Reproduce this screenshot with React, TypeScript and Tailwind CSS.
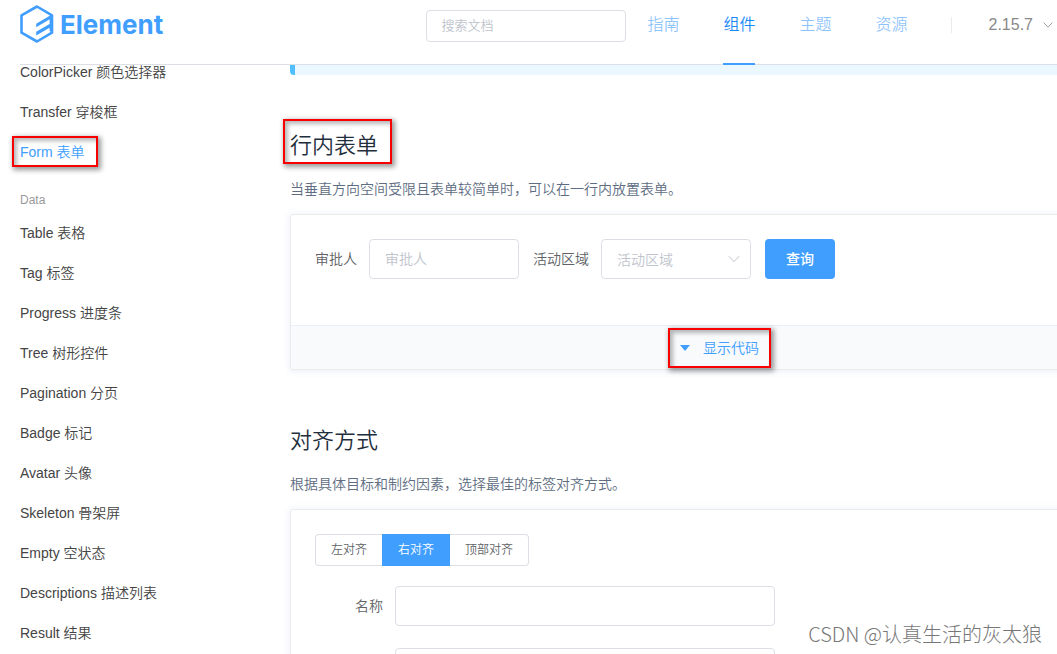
import type { ReactNode } from "react";

const sidebarTop = ["ColorPicker 颜色选择器", "Transfer 穿梭框", "Form 表单"];
const sidebarData = [
  "Table 表格",
  "Tag 标签",
  "Progress 进度条",
  "Tree 树形控件",
  "Pagination 分页",
  "Badge 标记",
  "Avatar 头像",
  "Skeleton 骨架屏",
  "Empty 空状态",
  "Descriptions 描述列表",
  "Result 结果",
];
const navItems = ["指南", "组件", "主题", "资源"];
const alignments = ["左对齐", "右对齐", "顶部对齐"];

function Marked({ children, className, frame }: { children: ReactNode; className?: string; frame: string }) {
  return (
    <span className={`relative inline-block ${className ?? ""}`}>
      {children}
      <span
        aria-hidden="true"
        className={`pointer-events-none absolute border-2 border-[#f80000] shadow-[2px_2px_5px_1px_rgba(0,0,0,0.4),inset_3px_3px_4px_rgba(0,0,0,0.28)] ${frame}`}
      />
    </span>
  );
}

function Arrow({ className }: { className: string }) {
  return (
    <svg viewBox="0 0 12 12" fill="none" stroke="currentColor" className={className} aria-hidden="true">
      <path d="M0.8 3.2 L6 8.6 L11.2 3.2" />
    </svg>
  );
}

function Logo() {
  return (
    <a href="#home" className="flex items-center gap-[6px] text-[#409eff]">
      <svg width="34" height="38" viewBox="0 0 34 38" aria-hidden="true">
        <path
          d="M17 1.5 L32 10.3 V27.7 L17 36.5 L1.5 27.7 V10.3 Z"
          fill="none"
          stroke="currentColor"
          strokeWidth="2.6"
          strokeLinejoin="round"
        />
        <path
          d="M16.2 18.8 L31 10 V13.6 L16.2 22.2 Z M16.2 26.8 L30 18.8 V22.4 L16.2 30.4 Z M29.6 11 H33 V28 L29.6 26 Z"
          fill="currentColor"
        />
      </svg>
      <span className="pt-[2px] font-['Inter',sans-serif] text-[26px] leading-8 font-bold">Element</span>
    </a>
  );
}

function Header() {
  return (
    <header className="ml-5 flex h-[65px] shrink-0 items-start border-b border-[#dcdfe6] pr-1">
      <div className="pt-[5px]">
        <Logo />
      </div>
      <input
        type="search"
        aria-label="搜索文档"
        placeholder="搜索文档"
        className="mt-[10px] ml-auto h-8 w-[200px] rounded border border-[#dcdfe6] px-[14px] pb-[2px] text-[13px] outline-none placeholder:text-[#c0c4cc]"
      />
      <nav className="ml-[21px] flex h-[65px] gap-[44px] text-base">
        {navItems.map((item) => (
          <a
            key={item}
            href="#nav"
            className={
              item === "组件"
                ? "border-b-2 border-[#409eff] pt-[13px] leading-6 text-[#1989fa]"
                : "pt-[13px] leading-6 text-[#1989fa]/50"
            }
          >
            {item}
          </a>
        ))}
      </nav>
      <button
        type="button"
        className="mt-[17px] ml-[43px] flex h-4 items-center border-l border-[#ebebeb] pl-[37px] text-base text-[#888888]"
      >
        2.15.7
        <Arrow className="ml-[10px] size-[10px] text-[#888888]" />
      </button>
    </header>
  );
}

function SidebarLink({ label }: { label: string }) {
  if (label === "Form 表单") {
    return (
      <a href="#form" className="block h-10 leading-10 text-[#409eff]">
        <Marked frame="top-1 -left-2 h-[31px] w-[86px]">{label}</Marked>
      </a>
    );
  }
  return (
    <a href="#component" className="block h-10 leading-10 text-[#444444]">
      {label}
    </a>
  );
}

function Sidebar() {
  return (
    <aside className="-mt-[13px] w-[270px] shrink-0 text-sm">
      {sidebarTop.map((label) => (
        <SidebarLink key={label} label={label} />
      ))}
      <h2 className="mt-[15px] h-[26px] text-xs leading-[26px] text-[#999999]">Data</h2>
      {sidebarData.map((label) => (
        <SidebarLink key={label} label={label} />
      ))}
    </aside>
  );
}

function DemoBlock({ title, text, children }: { title: ReactNode; text: string; children: ReactNode }) {
  return (
    <section className="mt-[55px]">
      <h3 className="text-[22px] leading-8 text-[#1f2f3d]">{title}</h3>
      <p className="mt-[15px] text-sm leading-6 text-[#5e6d82]">{text}</p>
      <div className="mt-[13px] rounded-[3px] border border-[#ebebeb] shadow-[0_0_8px_0_rgba(232,237,250,0.6),0_2px_4px_0_rgba(232,237,250,0.5)]">
        {children}
      </div>
    </section>
  );
}

function InlineForm() {
  return (
    <>
      <form className="flex gap-[14px] px-6 pt-6 pb-[46px] text-sm leading-10 text-[#606266]">
        <div className="flex gap-3">
          <label htmlFor="approver">审批人</label>
          <input
            id="approver"
            placeholder="审批人"
            className="h-10 w-[150px] rounded border border-[#dcdfe6] px-[15px] outline-none placeholder:text-[#c0c4cc]"
          />
        </div>
        <div className="flex gap-3">
          <label htmlFor="region">活动区域</label>
          <div className="relative h-10">
            <select
              id="region"
              defaultValue=""
              className="block h-10 w-[150px] appearance-none rounded border border-[#dcdfe6] bg-white px-[15px] pb-1 text-[#c0c4cc] outline-none"
            >
              <option value="">活动区域</option>
            </select>
            <Arrow className="pointer-events-none absolute top-[14px] right-[11px] size-3 text-[#c0c4cc]" />
          </div>
        </div>
        <button type="button" className="h-10 rounded bg-[#409eff] px-[21px] font-medium text-white">
          查询
        </button>
      </form>
      <div className="flex h-11 items-start justify-center rounded-b-[3px] border-t border-[#eaeefb] bg-[#f9fafc]">
        <button type="button" className="text-sm leading-10 text-[#409eff]">
          <Marked frame="top-0 -left-3 h-10 w-[103px]">
            <span className="flex items-center gap-[13px]">
              <svg width="10" height="6" viewBox="0 0 10 6" aria-hidden="true">
                <path d="M0 0 H10 L5 6 Z" fill="currentColor" />
              </svg>
              显示代码
            </span>
          </Marked>
        </button>
      </div>
    </>
  );
}

function AlignedForm() {
  return (
    <form className="p-6 text-sm text-[#606266]">
      <div role="radiogroup" aria-label="对齐方式" className="flex text-xs">
        {alignments.map((item) => (
          <label
            key={item}
            className="h-8 border-y border-[#dcdfe6] px-[15px] leading-[30px] first:rounded-l first:border-l last:rounded-r last:border-r has-checked:border-x has-checked:border-[#409eff] has-checked:bg-[#409eff] has-checked:text-white"
          >
            <input type="radio" name="align" defaultChecked={item === "右对齐"} className="sr-only" />
            {item}
          </label>
        ))}
      </div>
      <div className="mt-5 flex leading-10">
        <label htmlFor="name" className="w-20 pr-3 text-right">
          名称
        </label>
        <input id="name" className="h-10 w-[380px] rounded border border-[#dcdfe6] px-[15px] outline-none" />
      </div>
      <div className="mt-[22px] pl-20">
        <input
          aria-label="活动区域"
          className="block h-10 w-[380px] rounded border border-[#dcdfe6] px-[15px] outline-none"
        />
      </div>
    </form>
  );
}

export default function App() {
  return (
    <div className="relative flex h-screen flex-col overflow-hidden bg-white font-['Liberation_Sans','Noto_Sans_CJK_SC',sans-serif] font-[350]">
      <Header />
      <div className="flex min-h-0 flex-1 overflow-hidden pl-5">
        <Sidebar />
        <main className="-mr-[92px] min-w-0 flex-1">
          <div className="h-[10px] rounded-bl border-l-[5px] border-[#50bfff] bg-[#ecf8ff]" />
          <DemoBlock
            title={<Marked frame="-top-[11px] -left-[7px] h-[45px] w-[109px]">行内表单</Marked>}
            text="当垂直方向空间受限且表单较简单时，可以在一行内放置表单。"
          >
            <InlineForm />
          </DemoBlock>
          <DemoBlock title="对齐方式" text="根据具体目标和制约因素，选择最佳的标签对齐方式。">
            <AlignedForm />
          </DemoBlock>
        </main>
      </div>
      <p className="pointer-events-none absolute right-[15px] bottom-2 font-['Noto_Sans_CJK_SC',sans-serif] text-xl leading-6 font-light text-[#777777] [text-shadow:-1px_-1px_0_#ffffff]">
        CSDN @认真生活的灰太狼
      </p>
    </div>
  );
}
